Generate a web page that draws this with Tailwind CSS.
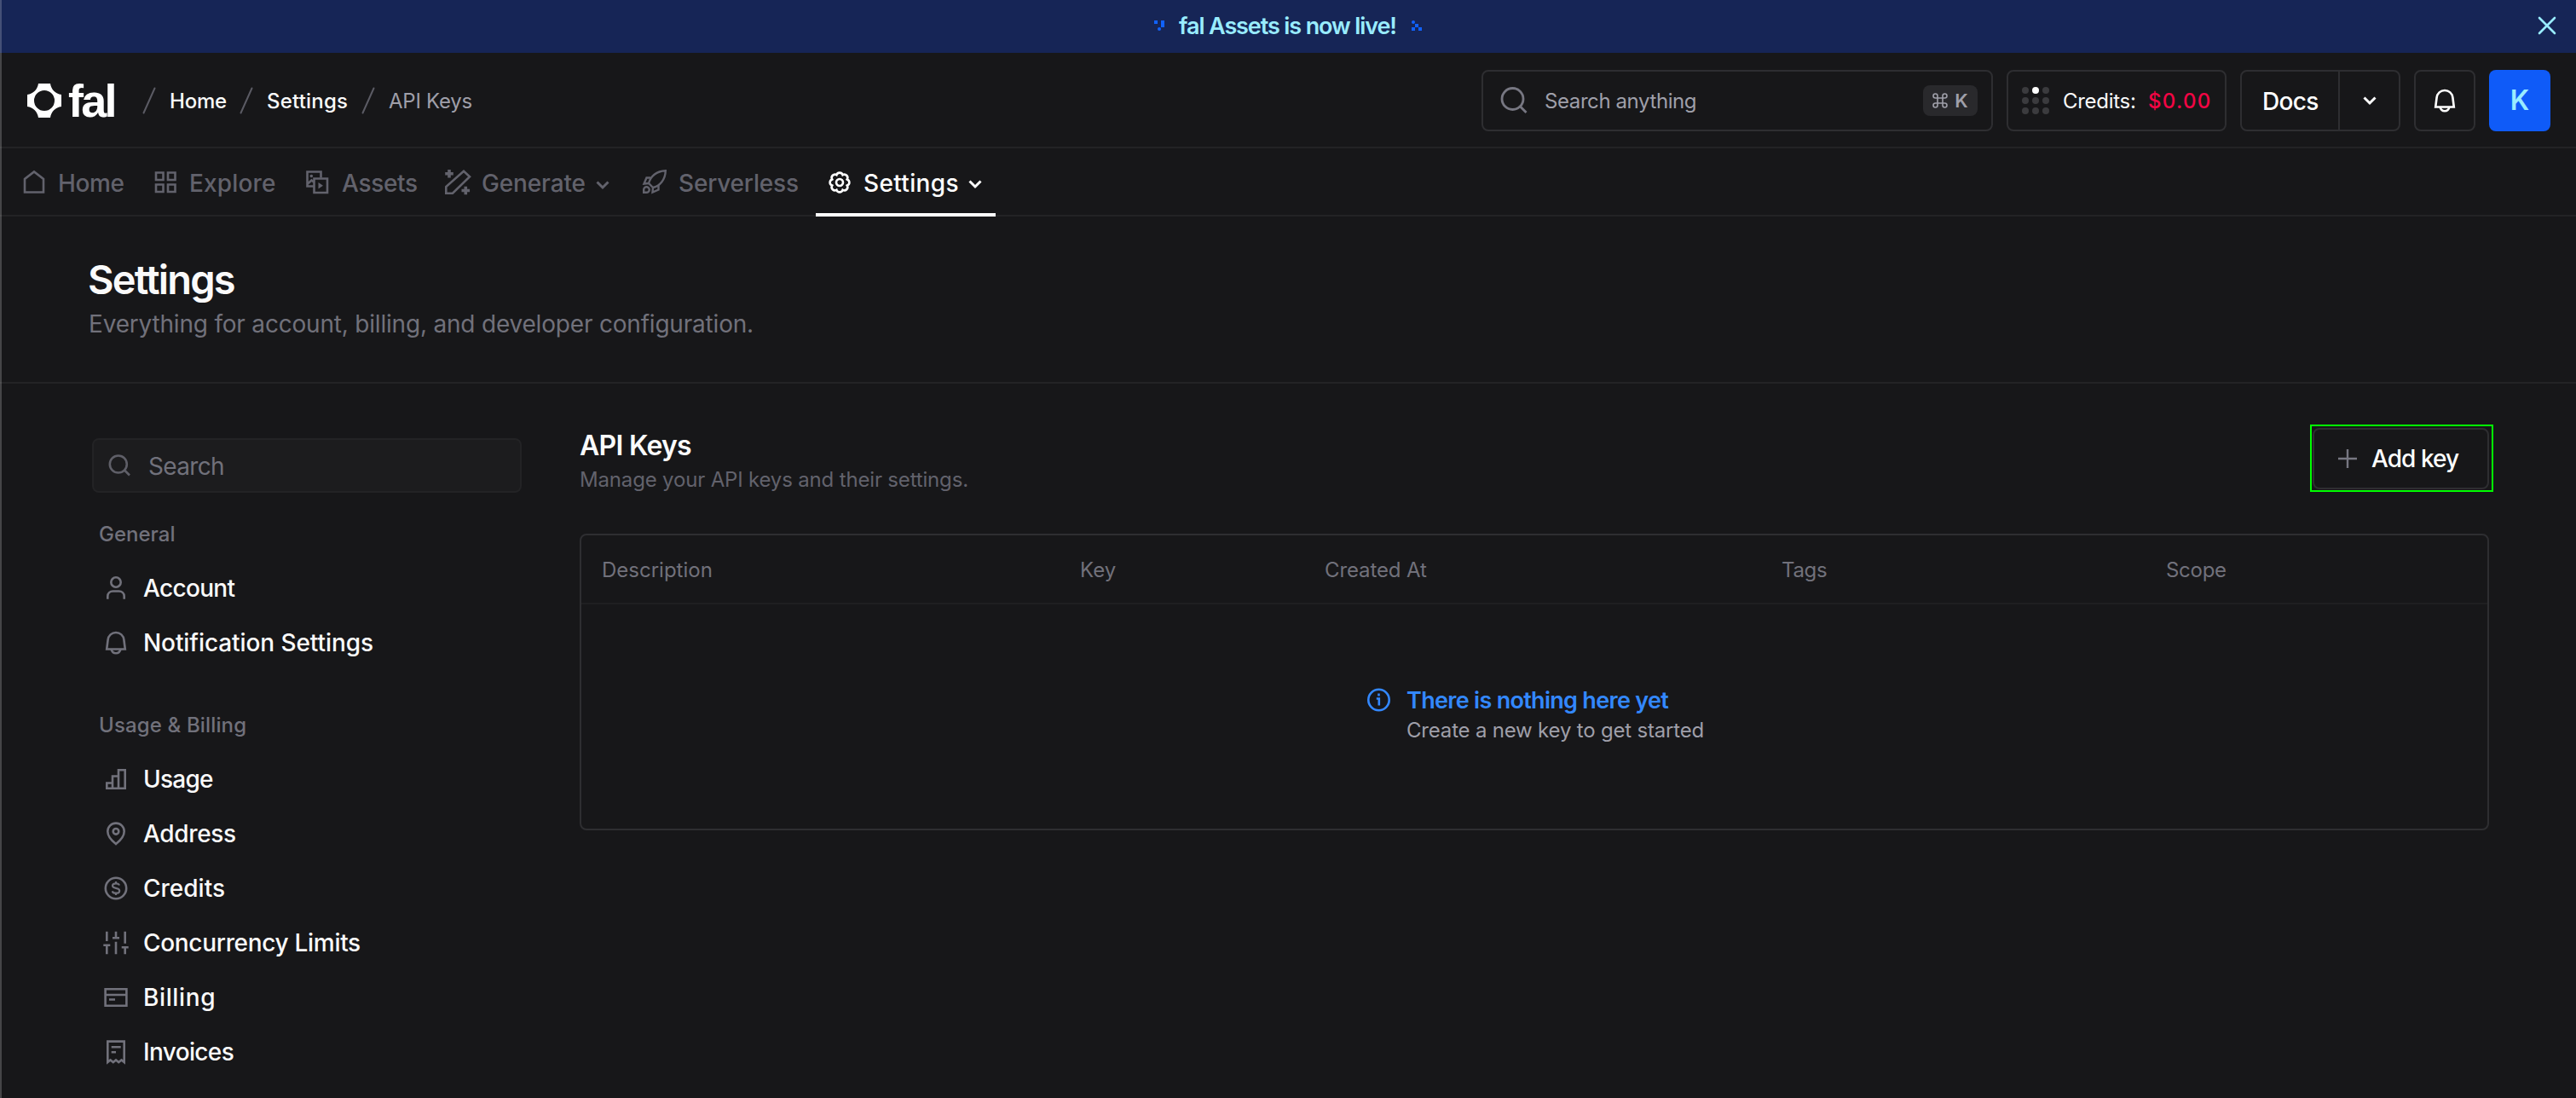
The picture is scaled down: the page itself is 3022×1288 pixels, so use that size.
<!DOCTYPE html>
<html lang="en">
<head>
    <meta charset="UTF-8">
    <meta name="viewport" content="width=device-width, initial-scale=1.0">
    <title>API Keys - fal</title>
    <script src="https://cdn.jsdelivr.net/npm/@tailwindcss/browser@4"></script>
</head>
<body class="bg-[#171719] h-screen overflow-hidden font-['Inter',sans-serif] text-[#fafafa] leading-none whitespace-nowrap">
    <!-- Window edge -->
    <div class="absolute left-0 top-0 w-[2px] h-full bg-white/20"></div>

    <!-- Announcement -->
    <div class="h-[62px] bg-[#162556] flex items-center justify-between pb-[2px]">
        <div class="w-[60px]"></div>
        <div class="flex items-center text-[27px] font-semibold text-[#99ecff] tracking-[-0.041em]">
            <svg class="w-3 h-3 mr-[17px]" viewBox="0 0 12 12" fill="#1062fe"><path d="M0 0h4v4H0zM8 0h4v8H8z"/><circle cx="6" cy="10" r="2"/></svg>
            <span>fal Assets is now live!</span>
            <svg class="w-3 h-3 ml-[18px]" viewBox="0 0 12 12" fill="#1062fe"><circle cx="2" cy="2" r="2"/><path d="M4 4h4v4H4zM0 8h4v4H0zM8 8h4v4H8z"/></svg>
        </div>
        <div class="w-[60px] flex justify-center pr-[8px]">
            <svg class="w-[22px] h-[22px]" viewBox="0 0 22 22" fill="none" stroke="#99ecff" stroke-width="2.6" stroke-linecap="round"><path d="M2 2l18 18M20 2L2 20"/></svg>
        </div>
    </div>

    <!-- Header -->
    <header class="h-28 border-b-2 border-[#232325] flex items-center justify-between pl-8 pr-[30px] pt-[2px]">
        <div class="flex items-center text-2xl leading-none font-medium">
            <svg class="w-10 h-10" viewBox="-20 -20 40 40" fill="white" fill-rule="evenodd"><path d="M-7-20H7C8-13 13-8 20-7V7C13 8 8 13 7 20H-7C-8 13-13 8-20 7V-7C-13-8-8-13-7-20ZM0-12A12 12 0 0 0 0 12 12 12 0 0 0 0-12Z"/></svg>
            <span class="w-[95px] pl-2 font-['Liberation_Sans',sans-serif] font-bold text-[54px] tracking-[-0.05em] text-white">fal</span>
            <svg class="w-4 h-8" viewBox="0 0 16 32" stroke="#5b5b64" stroke-width="2" stroke-linecap="round"><path d="M1.500 30.500L14.500 1.500"/></svg>
            <span class="w-[98px] pl-4 pt-[2px] tracking-[-0.01em]">Home</span>
            <svg class="w-4 h-8" viewBox="0 0 16 32" stroke="#5b5b64" stroke-width="2" stroke-linecap="round"><path d="M1.500 30.500L14.500 1.500"/></svg>
            <span class="w-[127px] pl-4 pt-[2px] tracking-[0.008em]">Settings</span>
            <svg class="w-4 h-8" viewBox="0 0 16 32" stroke="#5b5b64" stroke-width="2" stroke-linecap="round"><path d="M1.500 30.500L14.500 1.500"/></svg>
            <span class="pl-4 pt-[2px] text-[#9f9fa9] font-normal tracking-[-0.01em]">API Keys</span>
        </div>

        <div class="flex items-center gap-4">
            <div class="w-[600px] h-[72px] border-2 border-[#2e2e31] rounded-lg flex items-center pl-[20px] pr-4">
                <svg class="w-8 h-8" viewBox="0 0 32 32" fill="none" stroke="#777782" stroke-width="2.8"><circle cx="14.500" cy="14" r="12.500"/><path d="M23.500 23L30.500 30"/></svg>
                <span class="pl-5 pt-[2px] text-2xl leading-none text-[#9f9fa9] tracking-[-0.017em]">Search anything</span>
                <div class="ml-auto w-16 h-9 rounded-lg bg-[#29292c] text-[#9f9fa9] flex items-center justify-center gap-2">
                    <svg class="w-[18px] h-[18px]" viewBox="0 0 18 18" fill="none" stroke="#9f9fa9" stroke-width="1.600"><path d="M6 6h6v6H6zM6 6H3.500A2.500 2.500 0 1 1 6 3.500zM12 6V3.500A2.500 2.500 0 1 1 14.500 6zM12 12h2.500A2.500 2.500 0 1 1 12 14.500zM6 12v2.500A2.500 2.500 0 1 1 3.500 12z"/></svg>
                    <span class="text-[22px] font-semibold">K</span>
                </div>
            </div>
            <div class="w-[258px] h-[72px] border-2 border-[#2e2e31] rounded-lg flex items-center pl-4 text-2xl leading-none">
                <svg class="w-8 h-8" viewBox="0 0 32 32" fill="#3b3b3e"><circle cx="4" cy="4" r="4"/><circle cx="28" cy="4" r="4"/><circle cx="4" cy="16" r="4"/><circle cx="16" cy="16" r="4"/><circle cx="28" cy="16" r="4"/><circle cx="4" cy="28" r="4"/><circle cx="16" cy="28" r="4"/><circle cx="28" cy="28" r="4"/><circle cx="16" cy="4" r="4" fill="white"/></svg>
                <span class="w-[116px] pl-4 pt-[2px] tracking-[-0.012em]">Credits:</span>
                <span class="pt-[2px] font-medium text-[#f20544] tracking-[0.055em]">$0.00</span>
            </div>
            <div class="w-[188px] h-[72px] border-2 border-[#2e2e31] rounded-lg flex">
                <span class="w-[115px] border-r-2 border-[#2e2e31] flex items-center pl-[24px] pt-px text-[28px] font-medium tracking-[-0.025em] text-white">Docs</span>
                <span class="flex-1 flex items-center justify-center">
                    <svg class="w-4 h-3" viewBox="0 0 16 12" fill="none" stroke="white" stroke-width="3"><path d="M1.500 2.500L8 9L14.500 2.500"/></svg>
                </span>
            </div>
            <div class="w-[72px] h-[72px] border-2 border-[#2e2e31] rounded-lg flex items-center justify-center">
                <svg class="w-8 h-8" viewBox="0 0 32 32" fill="none" stroke="white" stroke-width="2.600"><path d="M5.200 23.500L6.600 12.500C7.200 7.500 11 4 16 4S24.800 7.500 25.400 12.500L26.800 23.500ZM10.500 23.500C11.300 26.800 13.300 28.300 16 28.300S20.700 26.800 21.500 23.500"/></svg>
            </div>
            <div class="w-[72px] h-[72px] rounded-lg bg-[#0f5bf8] text-[#99ecff] text-[32px] font-semibold flex items-center justify-center">K</div>
        </div>
    </header>

    <!-- Main nav -->
    <nav class="h-20 border-b-2 border-[#232325] flex pl-6 text-[28px] font-medium text-[#62626c]">
        <a class="w-[154px] flex items-center gap-3 tracking-[-0.014em]">
            <svg class="w-8 h-8" viewBox="0 0 32 32" fill="none" stroke="currentColor" stroke-width="2.600"><path d="M5 28.500V13L16 4.500L27 13V28.500Z"/></svg>
            <span class="pt-[3px]">Home</span>
        </a>
        <a class="w-[179px] flex items-center gap-3 tracking-[0.005em]">
            <svg class="w-8 h-8" viewBox="0 0 32 32" fill="none" stroke="currentColor" stroke-width="2.600"><path d="M5 5.500h8.500v8.500H5zM19 5.500h8.500v8.500H19zM5 19.500h8.500v8.500H5zM19 19.500h8.500v8.500H19z"/></svg>
            <span class="pt-[3px]">Explore</span>
        </a>
        <a class="w-[164px] flex items-center gap-3 tracking-[-0.012em]">
            <svg class="w-8 h-8" viewBox="0 0 32 32" fill="none" stroke="currentColor" stroke-width="2.600"><path d="M11 21.500H3.500V4.500H19.500V11.500M4 18.500L8.500 14.500L11 16.500"/><path d="M11.500 12.500h15.500v16.500H11.500z"/><path d="M16.500 17v7.500l5.500-3.750z" fill="currentColor" stroke="none"/><circle cx="8.300" cy="9.500" r="1.800" fill="currentColor" stroke="none"/></svg>
            <span class="pt-[3px]">Assets</span>
        </a>
        <a class="w-[231px] flex items-center gap-3 tracking-[-0.005em]">
            <svg class="w-8 h-8" viewBox="0 0 32 32" fill="none" stroke="currentColor" stroke-width="2.600"><path d="M2.300 29.700V22L23 3.800L30 10.300L10 29.700Z"/><path d="M6 2v9.500M1.200 6.700h9.600M25.300 21.800v9.500M20.500 26.500h9.600" stroke-width="3.600"/></svg>
            <span class="pt-[3px]">Generate</span>
            <svg class="w-4 h-3 mt-[7px]" viewBox="0 0 16 12" fill="none" stroke="currentColor" stroke-width="3"><path d="M1.500 2.500L8 9L14.500 2.500"/></svg>
        </a>
        <a class="w-[205px] flex items-center gap-3 tracking-[-0.007em]">
            <svg class="w-8 h-8" viewBox="0 0 32 32" fill="none" stroke="currentColor" stroke-width="2.400"><path d="M9 18C11 10 18 3.500 28.800 3.200C28.500 14 22 21 14 23Z"/><path d="M11 11.500H6.500L3.500 18.500L9 18M20.500 20V25.500L13.500 28.500L14 23"/><path d="M3.200 28.800V26A3.300 3.300 0 1 1 6.300 28.800Z"/></svg>
            <span class="pt-[3px]">Serverless</span>
        </a>
        <a class="w-[211px] h-20 border-b-4 border-white text-white flex items-center gap-3 pl-3 tracking-[0.012em]">
            <svg class="w-8 h-8 mt-[3px]" viewBox="-16 -16 32 32" fill="none" stroke="currentColor" stroke-width="2.600"><path d="M8.800-3.600A3.800 3.800 0 0 1 8.800 3.600A3.800 3.800 0 0 1 3.600 8.800A3.800 3.800 0 0 1-3.600 8.800A3.800 3.800 0 0 1-8.800 3.600A3.800 3.800 0 0 1-8.800-3.600A3.800 3.800 0 0 1-3.600-8.800A3.800 3.800 0 0 1 3.600-8.800A3.800 3.800 0 0 1 8.800-3.600Z"/><circle r="4"/></svg>
            <span class="pt-[5px]">Settings</span>
            <svg class="w-4 h-3 mt-2 -ml-px" viewBox="0 0 16 12" fill="none" stroke="currentColor" stroke-width="3"><path d="M1.500 2.500L8 9L14.500 2.500"/></svg>
        </a>
    </nav>

    <!-- Page title -->
    <section class="h-[196px] border-b-2 border-[#232325] pl-[103px] pt-11">
        <h1 class="h-[58px] flex items-center text-[47px] leading-none font-semibold tracking-[-0.039em]">Settings</h1>
        <p class="h-[46px] flex items-center pl-px pt-px text-[28px] leading-none text-[#71717b] tracking-[-0.007em]">Everything for account, billing, and developer configuration.</p>
    </section>

    <main class="flex pl-[108px] pr-[102px]">
        <!-- Sidebar -->
        <aside class="w-[504px] mr-[68px] pt-16 text-[28px] font-medium">
            <div class="h-16 border-2 border-[#232325] bg-[#1c1c1e] rounded-lg flex items-center gap-[18px] pl-[14px] font-normal text-[#71717b] tracking-[-0.024em]">
                <svg class="w-8 h-8" viewBox="0 0 32 32" fill="none" stroke="#5f5f68" stroke-width="2.600"><circle cx="14.800" cy="14.500" r="10"/><path d="M22 21.500L28 27.500"/></svg>
                <span class="pt-[2px]">Search</span>
            </div>

            <div class="mt-4 h-16 pl-2 pt-[2px] flex items-center text-2xl text-[#71717b]">General</div>
            <a class="h-16 pl-3 flex items-center gap-4 tracking-[-0.024em]">
                <svg class="w-8 h-8" viewBox="0 0 32 32" fill="none" stroke="#71717b" stroke-width="2.600"><circle cx="16" cy="9" r="5.700"/><path d="M6.300 28.700V25.500C6.300 22 9 19.500 12.500 19.500H19.500C23 19.500 25.700 22 25.700 25.500V28.700"/></svg>
                Account
            </a>
            <a class="h-16 pl-3 flex items-center gap-4 tracking-[-0.003em]">
                <svg class="w-8 h-8" viewBox="0 0 32 32" fill="none" stroke="#71717b" stroke-width="2.600"><path d="M5.200 23.500L6.600 12.500C7.200 7.500 11 4 16 4S24.800 7.500 25.400 12.500L26.800 23.500ZM10.500 23.500C11.300 26.800 13.300 28.300 16 28.300S20.700 26.800 21.500 23.500"/></svg>
                Notification Settings
            </a>

            <div class="mt-8 h-16 pl-2 pt-[2px] flex items-center text-2xl text-[#71717b] tracking-[0.006em]">Usage &amp; Billing</div>
            <a class="h-16 pl-3 flex items-center gap-4 tracking-[-0.027em]">
                <svg class="w-8 h-8" viewBox="0 0 32 32" fill="none" stroke="#71717b" stroke-width="2.600"><path d="M5.300 26.700V20.500H12V26.700ZM12 26.700V12.500H19V26.700ZM19 26.700V5.300H26.700V26.700Z"/></svg>
                Usage
            </a>
            <a class="h-16 pl-3 flex items-center gap-4 tracking-[-0.012em]">
                <svg class="w-8 h-8" viewBox="0 0 32 32" fill="none" stroke="#71717b" stroke-width="2.600"><path d="M16 28C9.500 23 6.300 18 6.300 13.300A9.700 9.700 0 0 1 25.700 13.300C25.700 18 22.500 23 16 28Z"/><circle cx="16" cy="13.300" r="3.300"/></svg>
                Address
            </a>
            <a class="h-16 pl-3 flex items-center gap-4">
                <svg class="w-8 h-8" viewBox="0 0 32 32" fill="none" stroke="#71717b" stroke-width="2.600"><circle cx="16" cy="16" r="12.200"/><path d="M20 12.500C19.500 11 18 10.300 16 10.300C13.500 10.300 12 11.400 12 13.100C12 17 20.200 14.800 20.200 18.900C20.200 20.700 18.500 21.700 16 21.700C13.800 21.700 12.200 20.900 11.700 19.300M16 8v2.300M16 21.700V24" stroke-width="2.200"/></svg>
                Credits
            </a>
            <a class="h-16 pl-3 flex items-center gap-4 tracking-[-0.011em]">
                <svg class="w-8 h-8" viewBox="0 0 32 32" fill="none" stroke="#71717b" stroke-width="2.600"><path d="M5.300 2.700V14M1.300 18.700h8M5.300 18.700V29.300M16 2.700V10.300M12 10.300h8M16 14.700V29.300M26.700 2.700V16.700M22.700 21.300h8M26.700 21.300V29.300"/></svg>
                Concurrency Limits
            </a>
            <a class="h-16 pl-3 flex items-center gap-4 tracking-[0.022em]">
                <svg class="w-8 h-8" viewBox="0 0 32 32" fill="none" stroke="#71717b" stroke-width="2.600"><path d="M3.600 6.300H28.400V25.700H3.600ZM3.600 13H28.400M8 18.500h7"/></svg>
                Billing
            </a>
            <a class="h-16 pl-3 flex items-center gap-4 tracking-[-0.023em]">
                <svg class="w-8 h-8" viewBox="0 0 32 32" fill="none" stroke="#71717b" stroke-width="2.600"><path d="M6.300 28V3.600H25.700V28L22.500 25.500L19.200 28L16 25.500L12.800 28L9.500 25.500ZM10.700 10.300h11M10.700 16.300H16"/></svg>
                Invoices
            </a>
        </aside>

        <!-- API keys -->
        <section class="flex-1 pt-12">
            <div class="h-32 flex justify-between">
                <div class="pt-[5px]">
                    <h2 class="h-10 flex items-center text-[32px] leading-none font-semibold tracking-[-0.023em]">API Keys</h2>
                    <p class="h-10 flex items-center text-2xl leading-none text-[#62626c] tracking-[-0.007em]">Manage your API keys and their settings.</p>
                </div>
                <div class="w-[215px] h-[79px] -mr-[5px] border-2 border-[#00ff00] pt-[2px] pl-px pr-[3px]">
                    <button class="w-full h-[72px] border-2 border-[#2e2e31] rounded-lg flex items-center gap-[16px] pl-[27px] text-[28px] font-medium text-white tracking-[-0.034em]">
                        <svg class="w-6 h-6" viewBox="0 0 24 24" stroke="#777782" stroke-width="2.400"><path d="M12 1v22M1 12h22"/></svg>
                        Add key
                    </button>
                </div>
            </div>

            <div class="h-[348px] border-2 border-[#2e2e31] rounded-lg">
                <div class="h-[81px] border-b-2 border-[#1f1f21] grid grid-cols-[561px_287px_536px_451px_1fr] items-center pl-[24px] pt-[2px] text-2xl leading-none text-[#71717b]">
                    <span>Description</span>
                    <span>Key</span>
                    <span class="tracking-[-0.005em]">Created At</span>
                    <span class="tracking-[-0.013em]">Tags</span>
                    <span class="tracking-[-0.012em]">Scope</span>
                </div>
                <div class="flex justify-center gap-[17px] pt-[94px]">
                    <svg class="w-8 h-8 mt-[2px]" viewBox="0 0 32 32" fill="none" stroke="#3388ff" stroke-width="2.600"><circle cx="16.500" cy="16" r="12.200"/><path d="M13.800 14.500H16.800V22.500M16.500 8.600v3"/></svg>
                    <div>
                        <p class="h-9 flex items-center text-[27px] leading-none font-semibold text-[#3388ff] tracking-[-0.026em]">There is nothing here yet</p>
                        <p class="h-[34px] flex items-center pt-[2px] text-2xl leading-none text-[#9f9fa9] tracking-[-0.008em]">Create a new key to get started</p>
                    </div>
                </div>
            </div>
        </section>
    </main>
</body>
</html>
